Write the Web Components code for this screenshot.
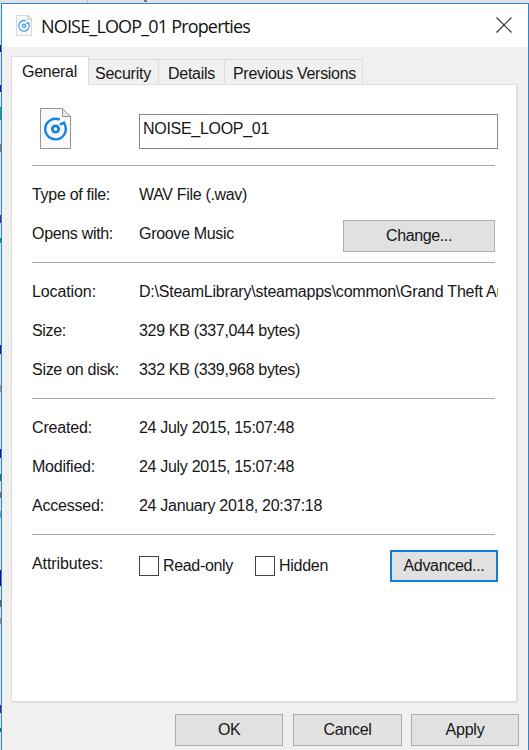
<!DOCTYPE html>
<html lang="en"><head><meta charset="utf-8"><title>NOISE_LOOP_01 Properties</title>
<style>html,body{margin:0;height:100%;overflow:hidden}body{font:16px/20px "Liberation Sans",Arial,sans-serif;color:#161616}</style></head>
<body><properties-dialog></properties-dialog>
<script>
const define = (name, html, setup) => customElements.define(name, class extends HTMLElement {
  constructor() {
    super();
    this.attachShadow({mode: 'open'}).innerHTML = html;
  }
  connectedCallback() { if (setup) setup(this, this.shadowRoot); }
});

// Text run whose tracking is adjusted so that it occupies the given width.
define('fit-text', `<style>:host{display:block;white-space:nowrap}span{display:inline-block}</style><span><slot></slot></span>`, (el, root) => {
  const span = root.querySelector('span');
  const target = +el.getAttribute('w');
  const n = el.textContent.length;
  if (target) span.style.letterSpacing = (target - span.getBoundingClientRect().width) / n + 'px';
});

define('audio-file-icon', `<style>:host{display:block;flex:none}svg{display:block;width:100%;height:100%}</style>
<svg viewBox="0 0 31 41" preserveAspectRatio="none"><path d="M.5.5H22.5L30.5 8.5V40.5H.5Z" fill="#f8f9fa" stroke="#949494"/><path d="M22.5 .5V8.5H30.5Z" fill="#e9e9e9" stroke="#999"/>
<path d="M19.8 11.7A10.3 10.3 0 1 0 25.2 17.6L24 14.6L19.8 16.6" fill="none" stroke="#1683dc" stroke-width="2.4"/><circle cx="15.5" cy="21" r="3.2" fill="none" stroke="#1683dc" stroke-width="2.7"/></svg>`);

define('push-button', `<style>:host{display:flex;box-sizing:border-box;align-items:center;justify-content:center;height:32px;background:#e1e1e1;border:1px solid #adadad;flex:none}:host([focused]){border:2px solid #0b7fd9}</style><slot></slot>`);

define('check-box', `<style>:host{display:flex;align-items:center;gap:4px}i{box-sizing:border-box;width:20px;height:20px;border:1px solid #444;background:#fff}</style><i></i><slot></slot>`);

define('prop-row', `<style>:host{display:flex;height:39px;align-items:center}.label{width:107px;flex:none}.value{flex:1;min-width:0;display:flex;align-items:center;overflow:hidden}</style>
<div class="label"><slot name="label"></slot></div><div class="value"><slot></slot></div><slot name="action"></slot>`);

define('prop-section', `<style>:host{display:block;padding:9px 0}hr{margin:-9px 3px 9px 0;height:1px;border:0;background:#aaa}</style><hr><slot></slot>`);

define('tab-item', `<style>:host{display:flex;box-sizing:border-box;height:25px;align-items:center;border:1px solid #dcdcdc;border-width:1px 1px 0 0;padding:4px 0 0 6px;background:#f0f0f0}
:host([active]){height:29px;background:#fff;border-left-width:1px;padding:1px 0 0 10px;margin-bottom:-1px}</style><slot></slot>`);

define('title-bar', `<style>:host{display:flex;height:43px;background:#fff;align-items:center;box-sizing:border-box;padding:0 16px 0 14px;font:18px/24px "Open Sans","Noto Sans",sans-serif;color:#111}
audio-file-icon{width:16px;height:21px;margin:0 9px 1px 0;opacity:.8}svg{width:16px;height:16px;margin-top:-1px}</style>
<audio-file-icon></audio-file-icon><slot></slot><span style="flex:1"></span><svg viewBox="0 0 16 16"><path d="M.5.5L15.5 15.5M15.5.5L.5 15.5" stroke="#333" stroke-width="1.2"/></svg>`);

define('properties-dialog', `<style>
:host{display:block;box-sizing:border-box;height:750px;width:529px;padding:3px 0 0 1px;background:
 linear-gradient(#191970,#191970) 0 45px/1px 7px no-repeat,
 linear-gradient(#191991,#191991) 0 85px/1px 7px no-repeat,
 linear-gradient(#12a191,#12a191) 0 107px/1px 13px no-repeat,
 linear-gradient(#a36f55,#a36f55) 0 144px/1px 8px no-repeat,
 linear-gradient(#641c94,#641c94) 0 215px/1px 8px no-repeat,
 linear-gradient(#118a8b,#118a8b) 0 238px/1px 5px no-repeat,
 linear-gradient(#111d9b,#111d9b) 0 345px/1px 9px no-repeat,
 linear-gradient(#c08b67,#c08b67) 0 385px/1px 7px no-repeat,
 linear-gradient(#1717b0,#1717b0) 0 449px/1px 9px no-repeat,
 linear-gradient(#16735e,#16735e) 0 474px/1px 7px no-repeat,
 linear-gradient(#896a58,#896a58) 0 492px/1px 6px no-repeat,
 linear-gradient(#61a2c9,#61a2c9) 0 511px/1px 7px no-repeat,
 linear-gradient(#0c0ca0,#0c0ca0) 0 570px/1px 16px no-repeat,
 linear-gradient(#716a12,#716a12) 0 600px/1px 7px no-repeat,
 linear-gradient(#b87e61,#b87e61) 0 618px/1px 6px no-repeat,
 linear-gradient(#5717a3,#5717a3) 0 705px/1px 8px no-repeat,
 linear-gradient(#107558,#107558) 0 728px/1px 4px no-repeat,
 linear-gradient(#bbb,#bbb) 87px 0/1px 3px no-repeat,
 linear-gradient(#777,#777) 144px 0/3px 2px no-repeat,#e1e4e7}
.window{box-sizing:border-box;height:747px;border:1px solid #2b86cc;border-bottom:0;background:#f0f0f0}
.body{padding:9px 10px 0 9px}.tabs{display:flex;align-items:flex-end;position:relative;height:28px}
.panel{box-sizing:border-box;height:619px;background:#fff;border:1px solid #dfdfdf;border-right-width:2px;border-bottom-width:2px;padding:22px 18px 0 20px}
.file{display:flex;height:58px}.file audio-file-icon{width:31px;height:41px;margin:1px 0 0 8px}.name{box-sizing:border-box;width:359px;flex:none;height:35px;border:1px solid #858585;margin:7px 0 0 68px;padding:4px 3px}
.footer{display:flex;justify-content:flex-end;gap:10px;margin:11px -1px 0 0}.opt{margin-top:4px}
</style>
<div class="window"><title-bar><fit-text w="209">NOISE_LOOP_01 Properties</fit-text></title-bar>
<div class="body"><div class="tabs">
<tab-item active style="width:78px"><fit-text w="55">General</fit-text></tab-item>
<tab-item style="width:70px"><fit-text w="56">Security</fit-text></tab-item>
<tab-item style="width:66px;padding-left:9px"><fit-text w="47">Details</fit-text></tab-item>
<tab-item style="width:138px;padding-left:8px"><fit-text w="123">Previous Versions</fit-text></tab-item></div>
<div class="panel"><div class="file"><audio-file-icon></audio-file-icon><div class="name"><fit-text w="126">NOISE_LOOP_01</fit-text></div></div>
<prop-section><prop-row><fit-text slot="label" w="78">Type of file:</fit-text><fit-text w="108">WAV File (.wav)</fit-text></prop-row>
<prop-row><fit-text slot="label" w="81">Opens with:</fit-text><fit-text w="95">Groove Music</fit-text><push-button slot="action" style="width:152px;margin:4px 3px 0 0"><fit-text w="66">Change...</fit-text></push-button></prop-row></prop-section>
<prop-section><prop-row><fit-text slot="label" w="64">Location:</fit-text><fit-text w="379">D:\\SteamLibrary\\steamapps\\common\\Grand Theft Auto</fit-text></prop-row>
<prop-row><fit-text slot="label" w="34">Size:</fit-text><fit-text w="161">329 KB (337,044 bytes)</fit-text></prop-row>
<prop-row><fit-text slot="label" w="87">Size on disk:</fit-text><fit-text w="161">332 KB (339,968 bytes)</fit-text></prop-row></prop-section>
<prop-section><prop-row><fit-text slot="label" w="60">Created:</fit-text><fit-text w="155">24 July 2015, 15:07:48</fit-text></prop-row>
<prop-row><fit-text slot="label" w="63">Modified:</fit-text><fit-text w="155">24 July 2015, 15:07:48</fit-text></prop-row>
<prop-row><fit-text slot="label" w="72">Accessed:</fit-text><fit-text w="183">24 January 2018, 20:37:18</fit-text></prop-row></prop-section>
<prop-section><prop-row><fit-text slot="label" w="71">Attributes:</fit-text><check-box class="opt" style="width:116px"><fit-text w="70">Read-only</fit-text></check-box><check-box class="opt"><fit-text w="49">Hidden</fit-text></check-box><push-button focused slot="action" style="width:108px;margin-top:5px"><fit-text w="81">Advanced...</fit-text></push-button></prop-row></prop-section>
</div><div class="footer"><push-button style="width:108px"><fit-text w="22">OK</fit-text></push-button><push-button style="width:109px"><fit-text w="48">Cancel</fit-text></push-button><push-button style="width:108px;margin-left:-1px"><fit-text w="39">Apply</fit-text></push-button></div>
</div></div>`);
</script></body></html>
